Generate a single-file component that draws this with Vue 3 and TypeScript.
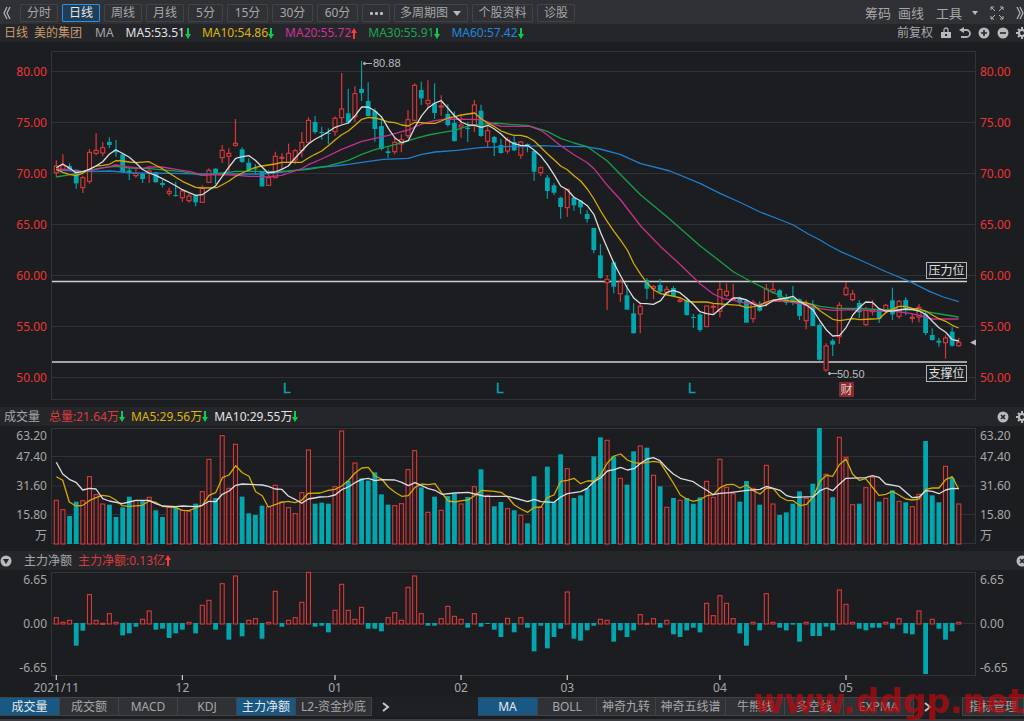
<script setup lang="ts">
import { ref } from 'vue'

type Tone = 'up' | 'down'
interface Candle { x: number; tone: Tone; high: number; top: number; bottom: number; low: number }
interface Bar { x: number; tone: Tone; y: number; h: number }

const STEP = 6.636
const FIRST = 56.3
const barX = (i: number): number => FIRST + i * STEP

/* Blocks of sessions, each recorded in thirds of a unit below its own base line: tone high,top,bottom,low */
const candleBlocks: [number, string][] = [
  [45, `R346,363,383,396 R328,361,373,376 T355,363,373,378 T374,374,415,432 R392,398,428,444 R312,322,409,416
R264,316,325,331 R291,308,324,334 T277,291,300,309 T285,315,322,335 T328,328,381,381 T370,376,384,405 R372,385,392,398
T384,386,402,414 R366,378,384,414 T380,382,412,412 T405,414,420,427 R428,439,445,452 T410,450,452,455 R434,438,458,470
R446,453,467,473 T450,452,472,484 R421,430,472,472 R370,376,412,412 T370,371,387,418 R300,316,338,354 R310,325,334,378
R222,295,301,305 T307,313,351,354 T340,353,377,378 T357,370,373,388 T381,381,424,424 R375,398,421,421 R320,334,398,398
R325,337,340,375 R296,325,352,352 R312,317,345,358 R261,292,317,337 R217,226,292,292 T213,231,261,266 T245,261,264,284
T250,264,267,297 R214,220,260,272 R84,192,218,236 T131,205,232,236 R124,146,215,230 T48,132,144,168 T112,168,213,213
T190,198,252,290 T214,243,312,316 T307,319,324,338 R278,292,320,328 R268,284,297,322 R195,224,272,280 R115,121,226,226
T110,135,160,180 R106,166,176,188 T115,175,204,222 R151,183,186,212 T178,207,240,245 T199,234,288,290 R212,240,246,278
T231,248,252,291`],
  [90, `R30,45,105,126 T44,62,138,140 R110,122,154,171 T138,141,158,198 T147,165,189,191 R142,150,183,191 T136,156,181,183
R153,156,195,206 T160,162,168,187 T182,183,245,272 R229,233,248,257 T255,263,303,326 T280,286,308,315 T320,323,351,386
R298,298,353,380 T320,323,346,362 T330,332,352,372 T360,372,387,398 T414,414,480,490 T462,496,564,566 R555,568,578,660
T514,517,590,610 R568,576,611,636 T584,616,659,659 T640,670,730,730 R636,649,672,730 T564,570,596,628 R585,590,595,628
T566,585,605,613 R588,598,609,616 T588,594,618,622`],
  [240, `R175,180,184,188 T172,180,225,227 T222,231,233,264 T220,223,270,275 R198,198,260,260 R190,199,202,222
R127,148,214,232 R130,154,166,172 R132,176,178,182 T170,175,188,195 T178,182,248,248 R180,187,236,248 T184,192,212,215
R132,147,190,200 R126,148,156,162 T148,151,172,178 T162,174,188,195 T138,175,188,196 T175,178,228,240 R180,194,242,268
T181,198,258,258 T250,255,359,362 R310,318,390,396 T297,302,314,348 R186,196,290,312 R126,144,164,168 R150,162,179,184
T180,189,217,235 R200,206,254,257 R180,209,215,226 T206,209,237,249 R192,196,210,222 T143,181,223,240 R180,184,229,236
T172,180,206,226 R222,232,235,248 R192,202,231,247 T215,223,279,286 T265,285,300,302 T294,302,308,320 R286,294,308,356
T262,275,317,320 R293,307,317,320`],
]

const candles: Candle[] = candleBlocks
  .flatMap(([base, rows]) =>
    rows.split(/\s+/).map((row) => {
      const [high, top, bottom, low] = row.slice(1).split(',').map((v) => base + Number(v) / 3)
      return { tone: (row[0] === 'R' ? 'up' : 'down') as Tone, high, top, bottom, low }
    }),
  )
  .map((c, i) => ({ ...c, x: barX(i) }))

const volumeRows = `R361 R389 T408 T365 R362 R290 R344 R372 T374 T411 T382 T350 R362 T362 R352 T391 T411 R382 T382 R391 R394
T371 R335 R238 T354 R167 R325 R193 T350 T400 T405 T377 R380 R316 R365 R383 R401 R338 R210 T371 T368 T371 R320 R153 T302
R249 T295 T302 T277 T343 T374 R377 R371 R269 R212 T322 R397 T350 R391 T348 T342 R372 T351 R320 T268 R346 T379 T366 R386
T391 R406 T430 T289 R382 T260 T366 T223 R266 T354 T346 T325 T229 T172 R181 T229 R295 T314 T214 R198 T203 R286 T319 R382
T354 R361 T354 T371 T352 R304 R352 R238 R322 R341 T365 T303 R325 T374 R256 R372 T405 T397 T371 T334 R355 T311 T144 R283
T352 R172 R232 R374 T371 R323 R292 T365 R355 T331 R364 T367 R380 R343 T183 T346 T367 R259 T294 R372`

const volumes: Bar[] = volumeRows.split(/\s+/).map((row, i) => {
  const y = 380 + Number(row.slice(1)) / 3
  return { x: barX(i), tone: row[0] === 'R' ? 'up' : 'down', y, h: 544 - y }
})

const flowRows = `R203 R217 R211 T287 T242 R134 R211 R220 R191 R217 T256 T250 T230 R208 R183 T239 T236 T264 T250 T239 R217
T250 R166 R151 T239 R101 T269 R78 T259 R211 R206 T266 R217 R124 T230 R211 R203 R157 R67 T230 T227 T247 R181 R103 R181
R208 R172 T236 T236 T244 R203 R188 R211 R112 R78 R191 T227 T227 R206 R169 R199 R208 T233 R191 T230 T221 T239 T261 R205
T247 R203 T233 T304 T227 T295 T261 T236 R126 T266 T272 T241 T227 R208 R211 T275 T241 T261 T241 R194 R220 R206 T233 R211
T253 T261 T241 T233 T247 R160 R197 R137 R160 R206 T250 T287 R217 T241 R131 R217 T233 T241 T224 T275 R217 T258 T258 T230
T241 R120 R163 R217 T236 T241 T233 T233 R217 T236 R206 T250 T253 R183 T372 R208 T236 T269 T244 R217`

const ZERO = 623
const flows: Bar[] = flowRows.split(/\s+/).map((row, i) => {
  const y = 550 + Number(row.slice(1)) / 3
  return row[0] === 'R'
    ? { x: barX(i), tone: 'up', y, h: Math.max(1, ZERO + 1 - y) }
    : { x: barX(i), tone: 'down', y: ZERO, h: Math.max(1, y - ZERO) }
})

type Piece = [number, number, string]
const trace = (pieces: Piece[]): string =>
  pieces
    .flatMap(([ox, oy, pts]) =>
      pts.split(/\s+/).map((p) => {
        const [x, y] = p.split(',').map(Number)
        return `${(ox + x / 3).toFixed(1)},${(oy + y / 3).toFixed(1)}`
      }),
    )
    .join(' ')

const averages: { name: string; points: string }[] = [
  {
    name: 'ma60',
    points: trace([
      [0, 45, '169,375 250,380 330,378 400,384 520,385 620,387 780,387'],
      [250, 45, '75,384 135,376 195,368 255,363 295,358 335,352 400,343 475,340 515,328 555,321 620,316 690,308 780,304'],
      [470, 90, '160,170 210,167 270,169 345,170 390,177 450,193 510,220 600,243 690,280 750,310 808,336 870,366 925,387 970,405 1015,432'],
      [680, 240, '420,0 450,18 480,34 540,60 620,96 690,125 750,155 790,171 836,185'],
    ]),
  },
  {
    name: 'ma30',
    points: trace([
      [0, 45, '169,396 228,386 268,376 308,368 347,364 387,369 447,371 507,376 547,380 607,391 667,384 707,379 780,379'],
      [250, 45, '50,381 115,378 175,373 235,363 295,346 335,328 375,314 435,299 495,281 535,270 574,263 614,256 654,243 694,238 734,234 780,238'],
      [470, 90, '172,106 232,124 272,145 312,159 352,170 412,213 452,254 512,315 592,381 690,467 750,514'],
      [680, 240, '160,95 210,123 260,148 310,172 339,178 380,189 420,199 470,205 539,205 600,209 640,208 700,210 737,215 780,222 836,231'],
    ]),
  },
  {
    name: 'ma20',
    points: trace([
      [0, 45, '169,372 208,375 248,379 288,373 328,365 347,360 380,365 427,371 447,366 487,366 527,373 567,379 607,390 660,389 707,390 747,394 780,394'],
      [250, 45, '50,396 95,391 135,378 155,371 175,359 215,342 275,313 335,289 375,280 415,271 455,260 475,255 515,237 555,227 590,222 654,223 694,224 734,238 754,244 780,244'],
      [470, 90, '180,109 212,121 232,135 272,167 312,194 352,218 372,236 412,286 452,330 512,408 572,470 632,525 690,581 730,612'],
      [680, 240, '130,176 160,181 200,190 239,193 279,184 320,184 380,195 420,206 458,211 519,209 600,214 640,213 690,220 717,226 757,237 836,237'],
    ]),
  },
  {
    name: 'ma10',
    points: trace([
      [0, 45, '169,373 188,382 208,388 228,392 248,385 268,373 288,363 308,361 328,358 347,347 367,348 388,351 407,353 447,350 467,361 487,371 507,384 527,397 547,409 567,418 587,427 607,429 650,428 667,419 687,408 707,394 727,384 747,375'],
      [250, 45, '16,367 36,363 56,360 75,357 95,352 155,352 175,339 195,328 215,318 235,302 255,285 275,269 295,258 315,241 335,223 355,217 375,219 395,224 415,231 435,233 455,240 475,243 495,232 515,233 535,235 555,235 574,228 594,219 614,215 634,210 654,207 674,204 694,222 714,235 734,245 754,258 774,266'],
      [470, 90, '132,136 152,136 172,141 192,152 212,172 232,191 252,209 272,228 292,239 312,257 332,273 352,297 372,327 392,363 412,395 432,424 452,451 472,480 492,522 512,553 532,580 552,600 572,611 592,615 612,619 632,624 652,634 672,636 710,636 730,640'],
      [680, 240, '140,193 178,196 200,203 220,200 239,196 259,186 279,180 299,179 339,184 380,189 400,195 420,212 440,226 458,238 479,242 499,239 519,236 539,239 577,237 597,236 617,218 637,208 657,199 677,199 697,205 717,207 737,213 757,225 777,236 797,244 817,256 836,264'],
    ]),
  },
  {
    name: 'ma5',
    points: trace([
      [0, 45, '169,368 188,357 208,369 228,383 248,380 268,373 288,363 308,350 328,328 347,314 367,325 388,337 407,353 427,373 447,384 467,391 487,401 507,411 527,422 547,434 567,443 587,451 607,449 627,435 647,422 667,394 687,366 707,340 727,335 747,332'],
      [250, 45, '16,346 36,366 53,383 75,381 95,373 115,363 135,340 155,318 175,297 195,283 215,272 235,260 255,247 275,240 295,234 315,212 335,186 355,186 375,198 395,216 415,250 435,279 455,293 475,287 495,246 515,212 535,188 555,174 574,167 594,190 614,213 634,231 654,240 674,241 694,247 714,241'],
      [470, 90, '72,116 92,131 112,150 132,161 152,166 174,167 192,180 213,199 232,223 252,254 272,288 292,299 312,322 332,333 352,347 372,374 392,428 412,474 432,520 452,558 472,594 492,625 510,640 530,641 550,643 572,632 590,607 610,601 630,608 650,625 670,643 690,665 710,671 730,674 750,657 770,641'],
      [680, 240, '160,174 178,174 200,180 220,192 239,200 259,195 279,182 299,177 319,174 339,169 359,185 380,196 400,211 420,243 440,271 458,288 479,286 499,262 519,224 539,202 557,186 577,187 597,206 617,213 637,213 657,210 677,207 697,208 717,213 737,223 757,244 777,263 797,277 817,299 836,303'],
    ]),
  },
]

const volumeAverages: { name: string; points: string }[] = [
  {
    name: 'ma10',
    points: trace([
      [0, 380, '169,290 188,301 208,366 228,378 248,376 268,362 288,353 308,346 328,349 347,360 367,377 387,379 427,376 447,363 467,367 487,379 527,383 547,391 567,392 587,384 607,376 627,346 647,338 667,293 687,285 707,257 727,278 747,289 767,335 787,347 805,381 825,374 845,367 865,364 885,368 905,361 925,340 960,339 985,331 1005,328'],
      [340, 380, '5,318 25,302 45,279 65,264 85,262 105,288 125,297 145,321 165,337 185,349 205,347 225,322 245,312 265,314 285,311 305,339 325,363 345,366 365,362 385,360 405,346 425,331 463,334 483,337 503,351 523,375 543,387 563,397 583,382 603,381 622,353 642,345 662,304 682,301 702,295 722,311 742,303 762,303 782,284 802,249 822,228 842,222 862,240 882,248 902,250 940,244 960,247 980,278 1000,309'],
      [680, 380, '1,345 20,357 40,364 60,359 80,347 100,344 120,323 140,314 160,313 180,324 200,315 220,332 240,342 260,324 280,326 300,350 320,361 340,362 360,377 380,373 400,350 420,303 440,286 458,289 478,254 498,237 518,283 538,301 557,296 577,321 597,346 617,343 637,334 657,345 677,357 697,360 717,357 737,328 757,324 777,324 797,299 817,290 836,328'],
    ]),
  },
  {
    name: 'ma5',
    points: trace([
      [0, 380, '169,247 188,282 208,298 228,307 248,330 268,325 288,327 308,356 328,363 367,371 387,366 407,361 447,361 467,371 487,378 527,380 547,378 587,380 607,376 627,364 647,365 667,343 687,333 707,316 727,312 787,315 805,319 825,327 845,328 865,348 885,358 905,370 925,357 960,351 985,350 1005,345'],
      [340, 380, '5,329 25,321 45,308 65,298 85,295 105,302 125,299 165,300 185,307 205,317 225,308 245,317 265,326 285,331 305,343 345,339 385,337 405,342 435,349 503,349 523,354 563,365 583,358 603,365 642,367 662,351 682,341 722,335 742,325 762,305 782,293 802,273 822,269 842,262 862,270 882,266 902,250 922,237 940,233 960,242 980,264 1000,282'],
      [680, 380, '1,295 40,305 60,319 80,331 100,344 120,340 150,338 200,331 240,328 260,319 300,331 320,347 340,352 400,350 420,332 440,324 458,332 478,313 498,295 557,293 577,287 597,292 617,312 657,319 697,353 717,351 737,332 757,334 777,341 797,330 817,325 836,326'],
    ]),
  },
]

const priceTicks = [80, 75, 70, 65, 60, 55, 50].map((v, i) => ({ label: v.toFixed(2), y: 71.5 + i * 51 }))
const volumeTicks = [
  { label: '63.20', y: 435.5, line: false },
  { label: '47.40', y: 456.5, line: true },
  { label: '31.60', y: 486, line: true },
  { label: '15.80', y: 514.5, line: true },
  { label: '万', y: 536, line: false },
]
const flowTicks = [
  { label: '6.65', y: 580 },
  { label: '0.00', y: 623.5 },
  { label: '-6.65', y: 668 },
]
const months = [
  { label: '2021/11', at: 0 },
  { label: '12', at: 19 },
  { label: '01', at: 42 },
  { label: '02', at: 61 },
  { label: '03', at: 77 },
  { label: '04', at: 100 },
  { label: '05', at: 119 },
]

const periods = ['分时', '日线', '周线', '月线', '5分', '15分', '30分', '60分']
const period = ref('日线')
const cycle = ref('多周期图')

const readings = [
  { name: 'ma5', text: 'MA5:53.51', dir: 'fall' },
  { name: 'ma10', text: 'MA10:54.86', dir: 'fall' },
  { name: 'ma20', text: 'MA20:55.72', dir: 'rise' },
  { name: 'ma30', text: 'MA30:55.91', dir: 'fall' },
  { name: 'ma60', text: 'MA60:57.42', dir: 'fall' },
]
const volumeReadings = [
  { name: 'total', text: '总量:21.64万', dir: 'fall' },
  { name: 'ma10', text: 'MA5:29.56万', dir: 'fall' },
  { name: 'ma5', text: 'MA10:29.55万', dir: 'fall' },
]

const lowerTabs = ['成交量', '成交额', 'MACD', 'KDJ', '主力净额', 'L2-资金抄底']
const lowerActive = ref(['成交量', '主力净额'])
const upperTabs = ['MA', 'BOLL', '神奇九转', '神奇五线谱', '牛熊线', '多空线', 'EXPMA']
const upperActive = ref('MA')

const toggleLower = (name: string): void => {
  lowerActive.value = lowerActive.value.includes(name)
    ? lowerActive.value.filter((n) => n !== name)
    : [...lowerActive.value, name]
}

const ARROW_DOWN = 'M2 0h2v6h2L3 11 0 6h2z'
const ARROW_UP = 'M2 11h2V5h2L3 0 0 5h2z'
const arrow = (dir: string): string => (dir === 'rise' ? ARROW_UP : ARROW_DOWN)
</script>

<template>
  <div class="terminal">
    <nav class="toolbar">
      <button class="icon-btn collapse" aria-label="收起">
        <svg width="8" height="14" viewBox="0 0 8 14"><path class="stroke" d="M4 1 1 7l3 6M7 1 4 7l3 6" /></svg>
      </button>
      <div class="periods">
        <button
          v-for="p in periods"
          :key="p"
          class="tool"
          :class="{ active: p === period, short: p === '5分', mid: p.length === 3 }"
          @click="period = p"
        >{{ p }}</button>
        <button class="tool dots" aria-label="更多周期">
          <svg width="13" height="3" viewBox="0 0 13 3">
            <rect class="solid" width="3" height="3" rx="1" /><rect class="solid" x="5" width="3" height="3" rx="1" /><rect class="solid" x="10" width="3" height="3" rx="1" />
          </svg>
        </button>
        <label class="cycle">
          <select v-model="cycle" aria-label="多周期图"><option>多周期图</option></select>
          <svg width="8" height="5" viewBox="0 0 8 5"><path class="solid" d="M0 0h8L4 5z" /></svg>
        </label>
        <button class="tool wide">个股资料</button>
        <button class="tool">诊股</button>
      </div>
      <div class="tools">
        <button class="plain">筹码</button>
        <button class="plain">画线</button>
        <button class="plain menu">
          工具
          <svg width="6" height="4" viewBox="0 0 6 4"><path class="solid" d="M0 0h6L3 4z" /></svg>
        </button>
        <button class="icon-btn" aria-label="全屏">
          <svg width="14" height="14" viewBox="0 0 14 14">
            <path class="stroke thin" d="M1 4V1h3M10 1h3v3M13 10v3h-3M4 13H1v-3M1 1l4 4M13 1 9 5M13 13 9 9M1 13l4-4" />
          </svg>
        </button>
        <button class="icon-btn" aria-label="展开">
          <svg width="8" height="14" viewBox="0 0 8 14"><path class="stroke" d="m1 1 3 6-3 6M4 1l3 6-3 6" /></svg>
        </button>
      </div>
    </nav>

    <header class="info">
      <span class="stock">日线</span>
      <span class="stock name">美的集团</span>
      <span class="kind">MA</span>
      <div class="readings">
        <span v-for="r in readings" :key="r.text" class="reading" :class="r.name">
          {{ r.text }}<svg width="6" height="11" viewBox="0 0 6 11"><path :class="r.dir" :d="arrow(r.dir)" /></svg>
        </span>
      </div>
      <div class="info-tools">
        <button class="plain small">前复权</button>
        <button class="icon-btn" aria-label="锁定">
          <svg width="12" height="12" viewBox="0 0 12 12">
            <path class="solid" fill-rule="evenodd" d="M1 5h10v6H1zM5 7v2h2V7z" /><path class="stroke" d="M4 5V3a2 2 0 0 1 4 0v2" />
          </svg>
        </button>
        <button class="icon-btn" aria-label="撤销">
          <svg width="12" height="12" viewBox="0 0 12 12">
            <path class="stroke heavy" d="M3 3h4.500a3.500 3.500 0 0 1 0 7H2" /><path class="solid" d="M5 0v6L0 3z" />
          </svg>
        </button>
        <button class="icon-btn" aria-label="放大">
          <svg width="12" height="12" viewBox="0 0 12 12"><circle class="solid" cx="6" cy="6" r="5.500" /><path class="cut" d="M3 6h6M6 3v6" /></svg>
        </button>
        <button class="icon-btn" aria-label="缩小">
          <svg width="12" height="12" viewBox="0 0 12 12"><circle class="solid" cx="6" cy="6" r="5.500" /><path class="cut" d="M3 6h6" /></svg>
        </button>
        <button class="icon-btn" aria-label="设置">
          <svg width="12" height="12" viewBox="0 0 12 12">
            <circle class="ring" cx="6" cy="6" r="3" /><path class="teeth" d="M6 0v3M6 9v3M0 6h3M9 6h3M2 2l2 2M8 8l2 2M2 10l2-2M8 4l2-2" />
          </svg>
        </button>
      </div>
    </header>

    <svg class="chart" viewBox="0 42 1024 365" role="img" aria-label="日线K线图">
      <rect class="frame" x="51.500" y="51.500" width="924" height="348" />
      <g v-for="t in priceTicks" :key="t.label">
        <line class="grid" x1="52" x2="976" :y1="t.y" :y2="t.y" />
        <text class="price" x="47" :y="t.y + 4" text-anchor="end">{{ t.label }}</text>
        <text class="price" x="980" :y="t.y + 4">{{ t.label }}</text>
      </g>
      <line class="level" x1="52" x2="967" y1="281.500" y2="281.500" />
      <line class="level" x1="52" x2="967" y1="362" y2="362" />
      <g v-for="c in candles" :key="c.x" :class="c.tone">
        <line class="wick" :x1="c.x" :x2="c.x" :y1="c.high" :y2="c.low" />
        <rect
          v-if="c.tone === 'up'"
          class="body"
          :x="c.x - 2"
          :y="c.top"
          width="4"
          :height="Math.max(1, c.bottom - c.top)"
        />
        <rect v-else class="body" :x="c.x - 2.4" :y="c.top" width="4.800" :height="Math.max(1, c.bottom - c.top)" />
      </g>
      <polyline v-for="a in averages" :key="a.name" class="avg" :class="a.name" :points="a.points" />
      <path class="pointer" d="M363 63.500h9M363 63.500l2-1.500v3z" />
      <text class="note" x="373" y="67">80.88</text>
      <path class="pointer" d="M828 373.500h9M828 373.500l2-1.500v3z" />
      <text class="note" x="837" y="378">50.50</text>
      <rect class="tag" x="926.500" y="262.500" width="40" height="16" />
      <text class="tag-text" x="946.500" y="275" text-anchor="middle">压力位</text>
      <rect class="tag" x="926.500" y="365.500" width="40" height="16" />
      <text class="tag-text" x="946.500" y="378" text-anchor="middle">支撑位</text>
      <text class="mark" x="283" y="393">L</text>
      <text class="mark" x="496" y="393">L</text>
      <text class="mark" x="688" y="393">L</text>
      <rect class="report" x="839" y="382" width="15" height="15" rx="1" />
      <text class="report-text" x="846.500" y="394" text-anchor="middle">财</text>
      <path class="solid" d="M970 342.500l6-3v6z" />
    </svg>

    <section class="panel-head">
      <h2>成交量</h2>
      <div class="readings tight">
        <span v-for="r in volumeReadings" :key="r.text" class="reading" :class="r.name">
          {{ r.text }}<svg width="6" height="11" viewBox="0 0 6 11"><path :class="r.dir" :d="arrow(r.dir)" /></svg>
        </span>
      </div>
      <div class="info-tools">
        <button class="icon-btn" aria-label="关闭成交量">
          <svg width="12" height="12" viewBox="0 0 12 12"><circle class="solid" cx="6" cy="6" r="5.500" /><path class="cut" d="m4 4 4 4M8 4 4 8" /></svg>
        </button>
        <button class="icon-btn" aria-label="成交量设置">
          <svg width="12" height="12" viewBox="0 0 12 12">
            <circle class="ring" cx="6" cy="6" r="3" /><path class="teeth" d="M6 0v3M6 9v3M0 6h3M9 6h3M2 2l2 2M8 8l2 2M2 10l2-2M8 4l2-2" />
          </svg>
        </button>
      </div>
    </section>

    <svg class="chart" viewBox="0 426 1024 125" role="img" aria-label="成交量">
      <rect class="frame" x="51.500" y="428.500" width="924" height="115" />
      <g v-for="t in volumeTicks" :key="t.label">
        <line v-if="t.line" class="grid" x1="52" x2="976" :y1="t.y" :y2="t.y" />
        <text class="axis" x="47" :y="t.y + 4" text-anchor="end">{{ t.label }}</text>
        <text class="axis" x="980" :y="t.y + 4">{{ t.label }}</text>
      </g>
      <g v-for="b in volumes" :key="b.x" :class="b.tone">
        <rect v-if="b.tone === 'up'" class="body" :x="b.x - 2" :y="b.y" width="4" :height="b.h" />
        <rect v-else class="body" :x="b.x - 2.4" :y="b.y" width="4.800" :height="b.h" />
      </g>
      <polyline v-for="a in volumeAverages" :key="a.name" class="avg" :class="a.name" :points="a.points" />
    </svg>

    <section class="panel-head flow-head">
      <button class="icon-btn" aria-label="展开主力净额">
        <svg width="12" height="12" viewBox="0 0 12 12"><circle class="solid" cx="6" cy="6" r="5.500" /><path class="hole" d="M3 4h6L6 9z" /></svg>
      </button>
      <h2>主力净额</h2>
      <span class="reading total">
        主力净额:0.13亿<svg width="6" height="11" viewBox="0 0 6 11"><path class="rise" :d="ARROW_UP" /></svg>
      </span>
      <div class="info-tools">
        <button class="icon-btn" aria-label="关闭主力净额">
          <svg width="12" height="12" viewBox="0 0 12 12"><circle class="solid" cx="6" cy="6" r="5.500" /><path class="cut" d="m4 4 4 4M8 4 4 8" /></svg>
        </button>
      </div>
    </section>

    <svg class="chart" viewBox="0 570 1024 127" role="img" aria-label="主力净额">
      <rect class="frame" x="51.500" y="572.500" width="924" height="103" />
      <line class="grid" x1="52" x2="976" y1="623.500" y2="623.500" />
      <g v-for="t in flowTicks" :key="t.label">
        <text class="axis" x="47" :y="t.y + 4" text-anchor="end">{{ t.label }}</text>
        <text class="axis" x="980" :y="t.y + 4">{{ t.label }}</text>
      </g>
      <g v-for="b in flows" :key="b.x" :class="b.tone">
        <rect v-if="b.tone === 'up'" class="body" :x="b.x - 2" :y="b.y" width="4" :height="b.h" />
        <rect v-else class="body" :x="b.x - 2.4" :y="b.y" width="4.800" :height="b.h" />
      </g>
      <g v-for="m in months" :key="m.label">
        <line class="tick" :x1="barX(m.at)" :x2="barX(m.at)" y1="675" y2="680" />
        <text class="axis" :x="barX(m.at)" y="692" text-anchor="middle">{{ m.label }}</text>
      </g>
    </svg>

    <footer class="tabs">
      <div class="group lower">
        <button
          v-for="t in lowerTabs"
          :key="t"
          class="tab"
          :class="{ active: lowerActive.includes(t), long: t.length > 6 }"
          @click="toggleLower(t)"
        >{{ t }}</button>
        <button class="icon-btn next" aria-label="更多副图指标">
          <svg width="8" height="10" viewBox="0 0 8 10"><path class="stroke bold" d="m1 1 5 4-5 4" /></svg>
        </button>
      </div>
      <div class="group">
        <button
          v-for="t in upperTabs"
          :key="t"
          class="tab"
          :class="{ active: t === upperActive, medium: t === '神奇五线谱' || t === 'EXPMA' }"
          @click="upperActive = t"
        >{{ t }}</button>
        <button class="icon-btn next" aria-label="更多主图指标">
          <svg width="8" height="10" viewBox="0 0 8 10"><path class="stroke bold" d="m1 1 5 4-5 4" /></svg>
        </button>
      </div>
      <button class="tab manage">指标管理</button>
    </footer>
    <div class="strip"></div>
    <div class="watermark">www.ddgp.net</div>
  </div>
</template>

<style>
body {
  background: #1c1d20;
}
</style>

<style scoped>
.terminal {
  position: relative;
  overflow: hidden;
  background: #1c1d20;
  color: #a6a7a9;
  font: 12px/18px "Noto Sans", "Noto Sans CJK SC", sans-serif;
}
button,
select {
  box-sizing: border-box;
  margin: 0;
  padding: 0;
  border: 0;
  background: none;
  color: inherit;
  font: inherit;
  white-space: nowrap;
}
.icon-btn {
  display: flex;
  flex: none;
  align-items: center;
  justify-content: center;
}
.toolbar {
  display: flex;
  align-items: center;
  box-sizing: border-box;
  height: 24px;
  padding: 2px 0 0 3px;
  background: #303135;
}
.collapse {
  width: 17px;
  justify-content: flex-start;
}
.periods {
  display: flex;
  gap: 4px;
}
.tool,
.cycle {
  width: 38px;
  height: 18px;
  border: 1px solid #424347;
  border-radius: 1px;
  line-height: 16px;
}
.tool.short {
  width: 35px;
}
.tool.mid {
  width: 41px;
}
.tool.wide {
  width: 61px;
}
.tool.dots {
  display: flex;
  align-items: center;
  justify-content: center;
  width: 28px;
}
.tool.active {
  border-color: #2694e6;
  background: #203d55;
  color: #e6e9ec;
}
.cycle {
  display: flex;
  align-items: center;
  box-sizing: border-box;
  width: 74px;
  padding: 0 6px 0 5px;
}
.cycle select {
  flex: 1;
  width: 50px;
  height: 16px;
  appearance: none;
  outline: none;
  line-height: 16px;
}
.tools {
  display: flex;
  align-items: center;
  gap: 12px;
  margin-left: auto;
}
.plain {
  font-size: 13px;
}
.plain + .plain {
  margin-left: -5px;
}
.plain + .menu {
  display: flex;
  align-items: center;
  gap: 10px;
  margin-left: 0;
}
.plain.small {
  font-size: 12px;
}
.info,
.panel-head {
  display: flex;
  align-items: center;
  box-sizing: border-box;
  height: 18px;
  padding-left: 4px;
  background: #25262a;
}
.panel-head {
  height: 19px;
}
.stock {
  color: #c99a6c;
}
.stock.name {
  margin: 0 13px 0 6px;
}
.readings {
  display: flex;
  gap: 11px;
  margin-left: 12px;
}
.readings.tight {
  gap: 6px;
  margin-left: 9px;
}
.reading {
  display: flex;
  align-items: center;
  white-space: nowrap;
}
.info-tools {
  display: flex;
  align-items: center;
  gap: 7px;
  margin-left: auto;
  margin-right: -4px;
}
h2 {
  margin: 0;
  font-size: 12px;
  font-weight: 400;
}
.flow-head {
  padding-left: 0;
}
.flow-head h2 {
  margin: 0 6px 0 12px;
}
.chart {
  display: block;
  width: 100%;
  height: auto;
}
.reading.ma5 { color: #e2e2e2; }
.reading.ma10 { color: #dcb40c; }
.reading.ma20 { color: #cf3297; }
.reading.ma30 { color: #17a84c; }
.reading.ma60 { color: #2088dc; }
.reading.total { color: #df3a3a; }
.rise { fill: #fb3b3b; }
.fall { fill: #0ccb50; }
.solid { fill: #b9babc; }
.hole { fill: #25262a; }
.stroke {
  fill: none;
  stroke: #b0b1b3;
  stroke-width: 1.3;
}
.stroke.thin { stroke-width: 1; }
.stroke.heavy { stroke-width: 1.8; }
.stroke.bold {
  stroke: #c4c5c7;
  stroke-width: 2;
}
.cut {
  fill: none;
  stroke: #25262a;
  stroke-width: 1.6;
}
.ring,
.teeth {
  fill: none;
  stroke: #b9babc;
  stroke-width: 2;
}
.frame {
  fill: none;
  stroke: #323337;
}
.grid { stroke: #303135; }
.level {
  stroke: #d0d1d2;
  stroke-width: 1.4;
}
.wick { stroke-width: 1.2; }
.up .wick { stroke: #d83839; }
.down .wick { stroke: #079ca3; }
.up .body {
  fill: #1c1d20;
  stroke: #dc3839;
  stroke-width: 1.1;
}
.down .body { fill: #00a7af; }
.avg {
  fill: none;
  stroke-linejoin: round;
  stroke-width: 1.3;
}
.avg.ma5 { stroke: #dcdcdd; }
.avg.ma10 { stroke: #d3aa05; }
.avg.ma20 { stroke: #c5318f; }
.avg.ma30 { stroke: #16a048; }
.avg.ma60 { stroke: #1d7fce; }
.price,
.axis { font-size: 12px; }
.price { fill: #ec3434; }
.axis { fill: #a6a7a9; }
.tick {
  stroke: #d0d1d2;
  stroke-width: 1.2;
}
.note {
  fill: #bcbdbf;
  font: 11px "Liberation Sans", sans-serif;
}
.pointer {
  fill: #b0b1b3;
  stroke: #b0b1b3;
  stroke-width: 1;
}
.tag {
  fill: #1c1d20;
  stroke: #b5b6b8;
}
.tag-text {
  fill: #e0e0e1;
  font-size: 12px;
}
.mark {
  fill: #07a4ac;
  stroke: #07a4ac;
  stroke-width: 0.4;
  font: 14px "Liberation Sans", sans-serif;
}
.report { fill: #852c2e; }
.report-text {
  fill: #e8c6c6;
  font-size: 12px;
}
.tabs {
  display: flex;
  height: 19px;
  background: #1f2023;
}
.group {
  display: flex;
}
.lower {
  flex: 0 0 478px;
}
.tab {
  flex: none;
  width: 59px;
  height: 19px;
  border: 1px solid #424347;
  border-left-width: 0;
  background: #303135;
  line-height: 17px;
}
.tab:first-child {
  width: 60px;
}
.tab.medium {
  width: 70px;
}
.tab.long {
  width: 76px;
}
.tab.active {
  background: #195883;
  color: #e6e9ec;
}
.next {
  width: 28px;
}
.tab.manage {
  width: 62px;
  margin-left: auto;
  border-left-width: 1px;
}
.strip {
  box-sizing: border-box;
  height: 5px;
  border-top: 3px solid #1c1d20;
  background: #3a3b3f;
}
.watermark {
  position: absolute;
  right: 0;
  bottom: 0;
  color: rgba(190, 8, 14, 0.7);
  font: bold 33px/38px "DejaVu Sans", sans-serif;
  pointer-events: none;
}
</style>
